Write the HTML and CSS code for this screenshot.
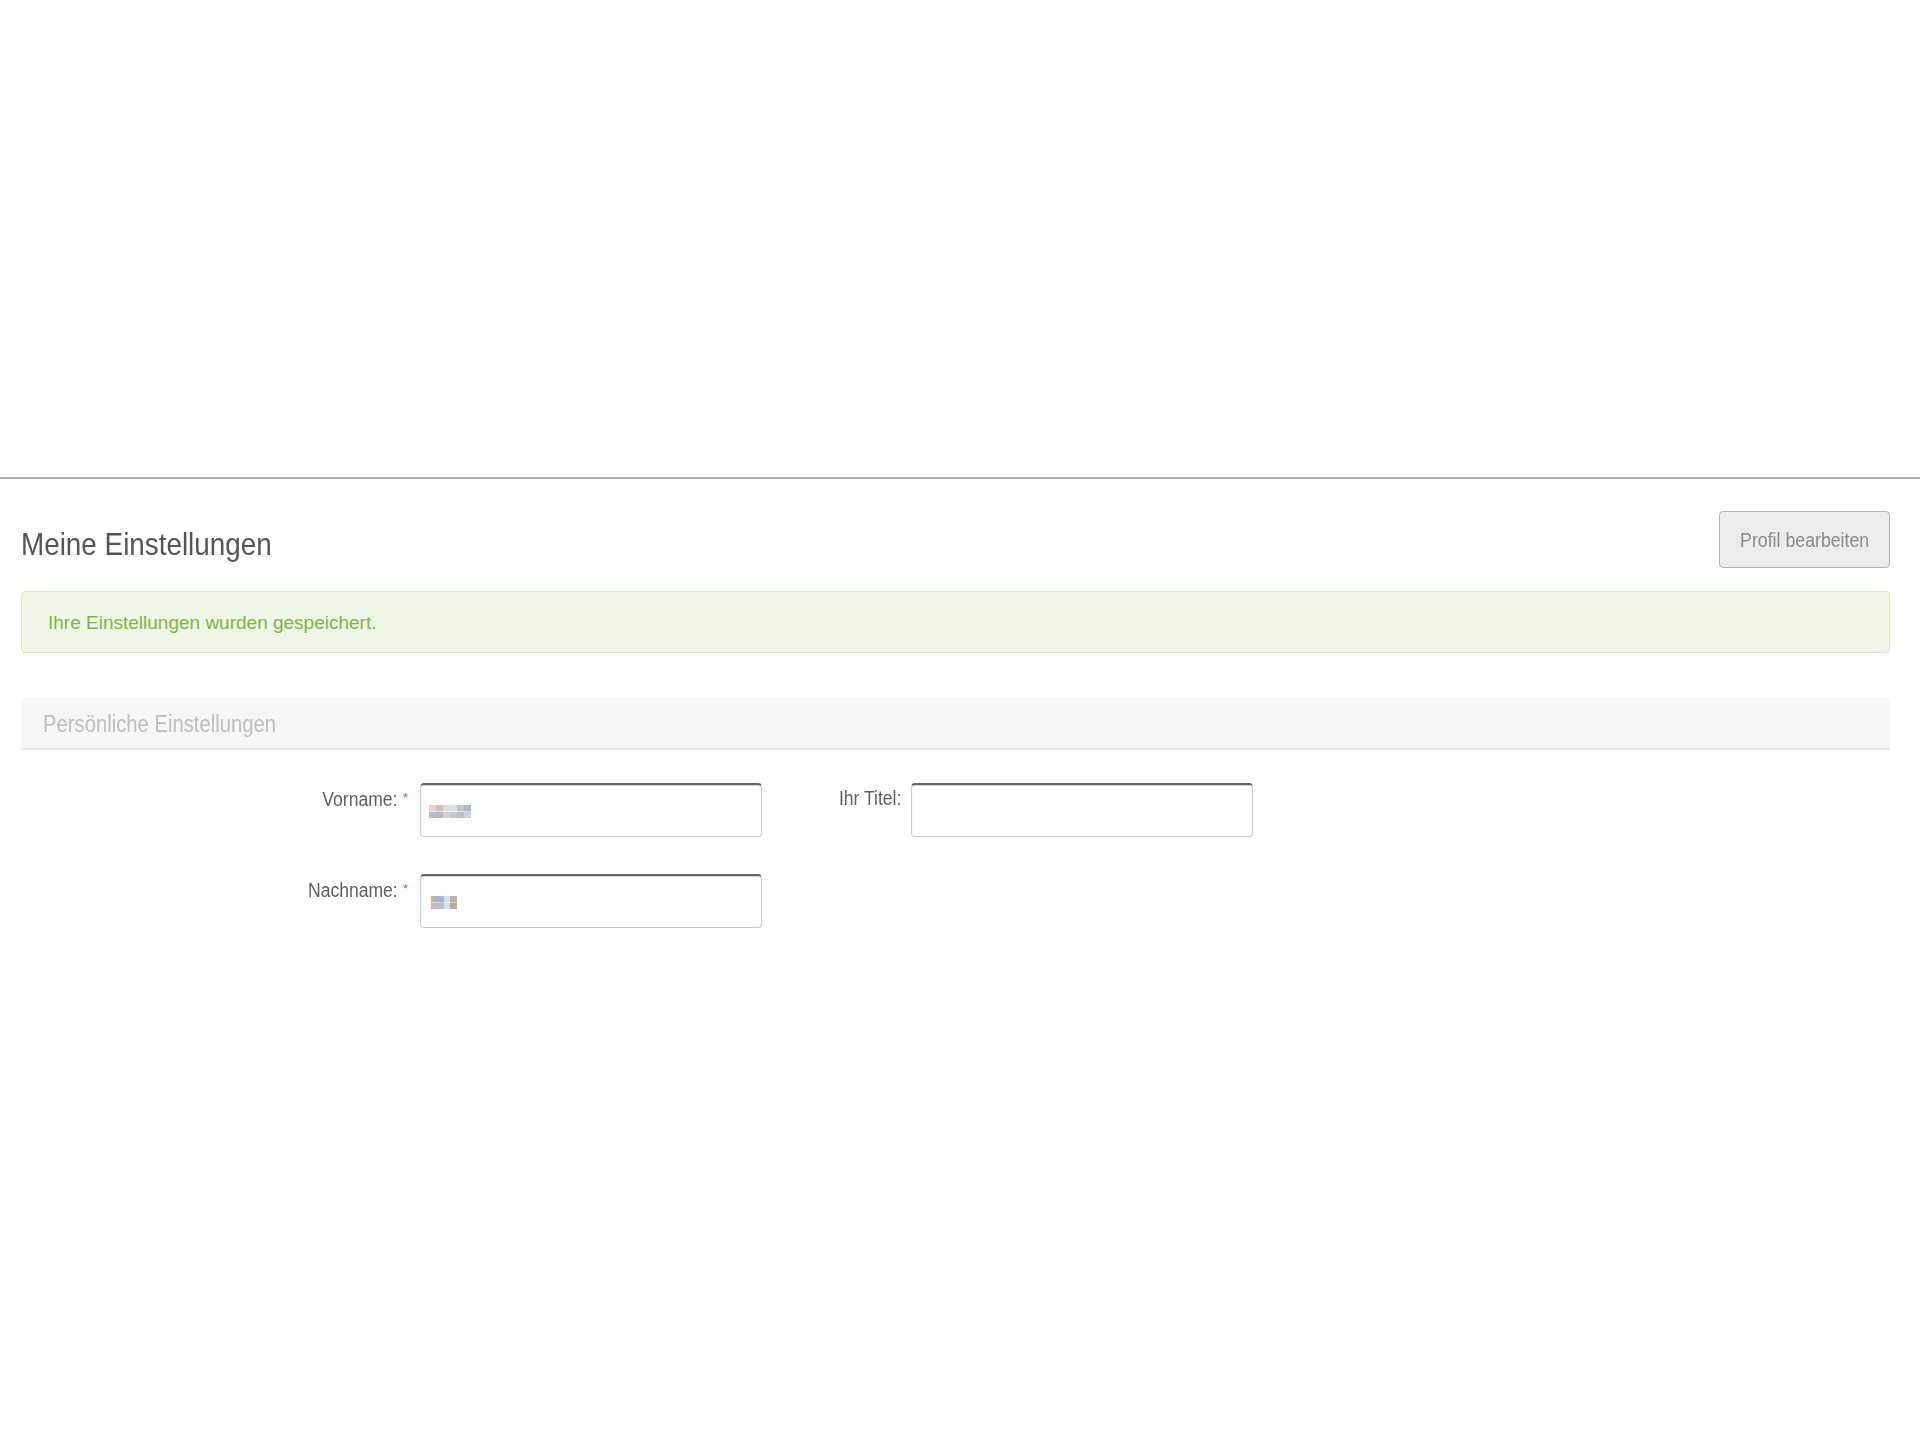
FILE: index.html
```html
<!DOCTYPE html>
<html lang="de">
<head>
<meta charset="utf-8">
<title>Meine Einstellungen</title>
<link rel="stylesheet" href="styles.css">
</head>
<body>
<div class="top-space"></div>
<main class="content">
  <div class="page-header">
    <h1 class="page-title"><span class="cond cond-title">Meine Einstellungen</span></h1>
    <button class="btn" type="button"><span class="cond cond-btn">Profil bearbeiten</span></button>
  </div>
  <div class="alert">Ihre Einstellungen wurden gespeichert.</div>
  <section class="panel">
    <h2 class="panel-title"><span class="cond cond-panel">Persönliche Einstellungen</span></h2>
    <div class="form-grid">
      <label class="field-label"><span class="cond cond-label">Vorname:</span><span class="req">*</span></label>
      <div class="field-input"><span class="mosaic mosaic-a"></span></div>
      <label class="field-label field-label-plain"><span class="cond cond-label">Ihr Titel:</span></label>
      <div class="field-input"></div>
      <label class="field-label"><span class="cond cond-label">Nachname:</span><span class="req">*</span></label>
      <div class="field-input"><span class="mosaic mosaic-b"></span></div>
    </div>
  </section>
</main>
</body>
</html>
```
FILE: styles.css
```css
html, body {
  margin: 0;
  padding: 0;
  background: #ffffff;
}
body {
  font-family: "Liberation Sans", Arial, sans-serif;
  color: #555;
}
.cond {
  display: inline-block;
  white-space: nowrap;
}
.top-space {
  height: 477px;
  border-bottom: 2px solid #adadad;
}
.content {
  padding: 0 30px 0 21px;
}
.page-header {
  margin-top: 32px;
  display: flex;
  justify-content: space-between;
  align-items: flex-start;
}
.page-title {
  margin: 14px 0 0;
  font-size: 32px;
  line-height: 38px;
  font-weight: normal;
  color: #555;
}
.cond-title {
  transform: scaleX(0.87);
  transform-origin: left center;
}
.btn {
  box-sizing: border-box;
  width: 171px;
  height: 57px;
  padding: 0;
  display: flex;
  align-items: center;
  justify-content: center;
  border: 1.5px solid #b3b3b3;
  border-radius: 4px;
  background: #ececec;
  font-family: "Liberation Sans", Arial, sans-serif;
  font-size: 20.5px;
  color: #8a8a8a;
}
.cond-btn {
  transform: scaleX(0.865);
  transform-origin: center center;
}
.alert {
  margin-top: 23px;
  padding: 21px 26px 19px;
  border: 1px solid #d3e9c2;
  border-radius: 4px;
  background: #eff6e7;
  font-size: 19px;
  line-height: 20px;
  color: #7db544;
}
.panel {
  margin-top: 45px;
}
.panel-title {
  margin: 0;
  padding: 11.5px 22px 10.5px;
  background: #f7f7f7;
  border-bottom: 2px solid #e7e7e7;
  font-size: 24.4px;
  line-height: 28px;
  font-weight: normal;
  color: #bdbdbd;
}
.cond-panel {
  transform: scaleX(0.83);
  transform-origin: left center;
}
.form-grid {
  margin-top: 33px;
  display: grid;
  grid-template-columns: 389px 342px 129px 342px;
  column-gap: 10px;
  row-gap: 37px;
}
.field-label {
  padding: 3px 2px 0 0;
  text-align: right;
  font-size: 19.5px;
  line-height: 24px;
  color: #5e5e5e;
}
.field-label-plain {
  padding-right: 0;
}
.cond-label {
  transform: scaleX(0.9);
  transform-origin: right center;
}
.req {
  font-size: 13px;
  margin-left: 5px;
  vertical-align: 4px;
  color: #e6457a;
}
.field-input {
  box-sizing: border-box;
  height: 54px;
  display: flex;
  align-items: center;
  padding: 2px 0 0 8px;
  border: 1px solid #cdcdcd;
  border-top: 2px solid #666;
  border-radius: 4px;
  box-shadow: inset 0 1px 1px rgba(0, 0, 0, 0.18);
  background: #fff;
}
.mosaic {
  display: block;
  height: 13px;
  filter: blur(0.5px);
}
.mosaic-a {
  width: 42px;
  background:
    linear-gradient(90deg, #e9d3c6 0 7px, #c3c5cc 7px 14px, #e4dcd0 14px 21px, #d4e2ea 21px 28px, #cbc4c3 28px 35px, #a8bcdc 35px 42px) top / 100% 50% no-repeat,
    linear-gradient(90deg, #b9bac2 0 7px, #b5b8c0 7px 14px, #d6d2ca 14px 21px, #bec8d2 21px 28px, #c2bfc0 28px 35px, #c7d3e8 35px 42px) bottom / 100% 50% no-repeat;
}
.mosaic-b {
  width: 26px;
  margin-left: 2px;
  background:
    linear-gradient(90deg, #e8b070 0 2px, #aab4c4 2px 13px, #cfe3ea 13px 19px, #c2b09e 19px 26px) top / 100% 50% no-repeat,
    linear-gradient(90deg, #e8b070 0 2px, #b6bec8 2px 13px, #d4e4ea 13px 19px, #bcab98 19px 26px) bottom / 100% 50% no-repeat;
}
```
